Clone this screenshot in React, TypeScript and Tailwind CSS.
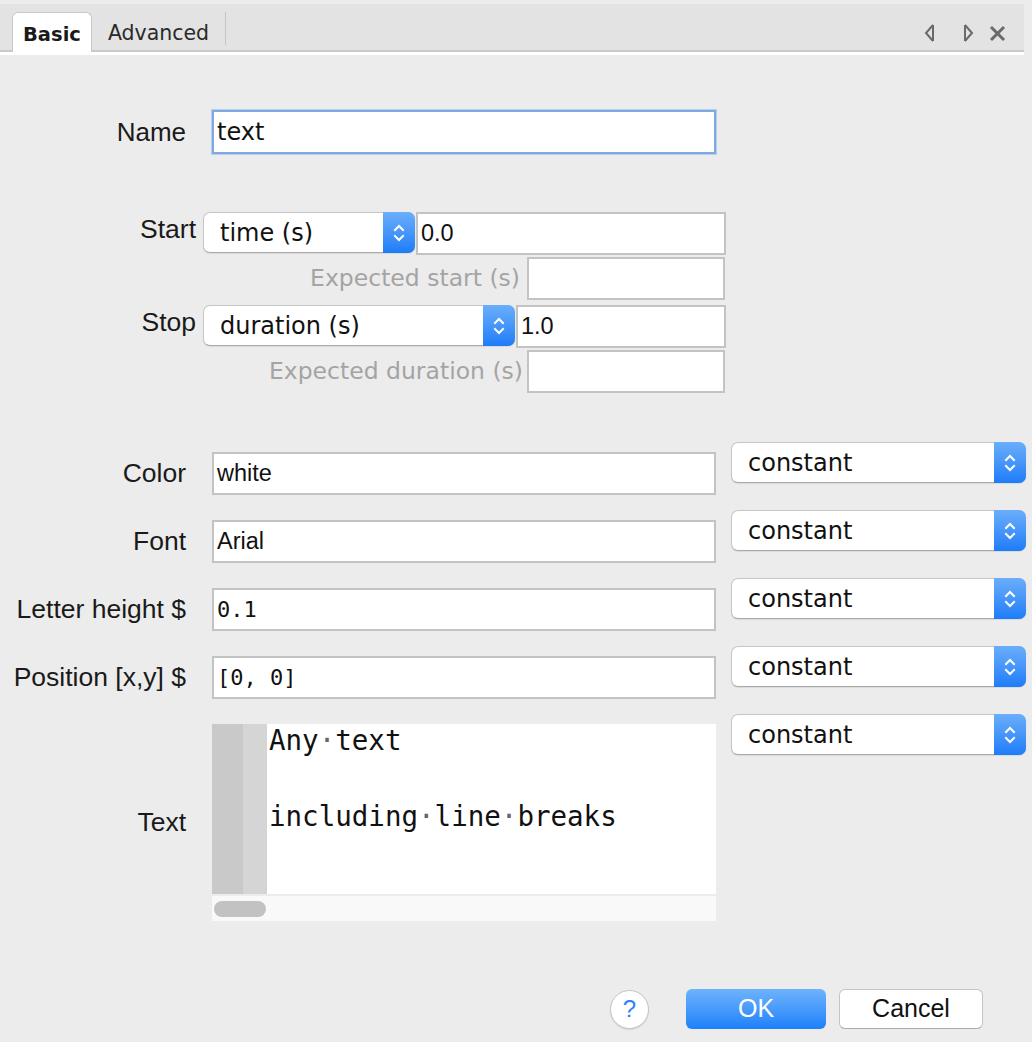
import React from 'react';

const labelFont = { fontFamily: '"Liberation Sans", Arial, sans-serif' };
const uiFont = { fontFamily: '"DejaVu Sans", "Liberation Sans", sans-serif' };
const monoFont = { fontFamily: '"DejaVu Sans Mono", "Liberation Mono", monospace' };

const Chevrons: React.FC = () => (
  <svg width="14" height="24" viewBox="0 0 14 24" fill="none" stroke="white" strokeWidth="2" strokeLinecap="square">
    <polyline points="3,9 7,5 11,9" />
    <polyline points="3,15 7,19 11,15" />
  </svg>
);

const Dropdown: React.FC<{ value: string; width: string }> = ({ value, width }) => (
  <div className={`flex h-[41px] ${width} shrink-0 rounded-[7px] bg-white border border-[#c6c6c6] border-b-[#a9a9a9] shadow-[0_1px_1px_rgba(0,0,0,0.08)]`}>
    <div className="flex-1 flex items-center pl-[16px] text-[24px] text-[#111]" style={uiFont}>
      {value}
    </div>
    <div className="w-[32px] -my-px -mr-px rounded-r-[7px] bg-gradient-to-b from-[#6aaefb] to-[#1b7cf8] flex items-center justify-center">
      <Chevrons />
    </div>
  </div>
);

const TextInput: React.FC<{ value?: string; width: string; mono?: boolean; className?: string }> = ({ value = '', width, mono, className = '' }) => (
  <div
    className={`${width} h-[43px] shrink-0 bg-white border-2 border-[#c3c3c3] flex items-center pl-[3px] text-[#111] ${mono ? 'text-[22px]' : 'text-[23.5px]'} ${className}`}
    style={mono ? monoFont : labelFont}
  >
    {value}
  </div>
);

const PropRow: React.FC<{ label: string; value: string; mono?: boolean }> = ({ label, value, mono }) => (
  <div className="flex items-start">
    <div className="w-[186px] mt-[10px] h-[43px] flex items-center justify-end text-[26.5px] text-[#1a1a1a] whitespace-nowrap" style={labelFont}>
      {label}
    </div>
    <TextInput value={value} width="w-[504px]" mono={mono} className="ml-[26px] mt-[10px]" />
    <div className="ml-[15px]">
      <Dropdown value="constant" width="w-[295px]" />
    </div>
  </div>
);

const Dot = () => <span className="text-[#666]">·</span>;

export default function App() {
  return (
    <div className="w-[1032px] h-[1042px] bg-[#ececec] flex flex-col overflow-hidden" style={labelFont}>
      {/* tab bar */}
      <div className="mt-[4px] mr-[8px] h-[48px] bg-[#e3e3e3] border-b-2 border-[#c9c9c9] flex items-end pl-[12px]">
        <div className="h-[40px] -mb-[2px] bg-white border border-b-0 border-[#c8c8c8] rounded-t-[6px] px-[10px] pt-[4px] flex items-center text-[19.5px] font-bold text-[#1a1a1a]" style={uiFont}>
          Basic
        </div>
        <div className="h-[38px] px-[16px] pt-[4px] flex items-center text-[20.5px] text-[#2a2a2a]" style={uiFont}>
          Advanced
        </div>
        <div className="self-start mt-[8px] w-px h-[33px] bg-[#c6c6c6]" />
        <div className="flex-1" />
        <div className="self-start mt-[20px] flex items-center text-[#6a6a6a]">
          <svg width="11" height="18" viewBox="0 0 11 18" fill="none" stroke="currentColor" strokeWidth="2">
            <polyline points="9,1 9,17" />
            <polyline points="9,1 2,9 9,17" />
          </svg>
          <svg className="ml-[28px]" width="11" height="18" viewBox="0 0 11 18" fill="none" stroke="currentColor" strokeWidth="2">
            <polyline points="2,1 2,17" />
            <polyline points="2,1 9,9 2,17" />
          </svg>
          <svg className="ml-[15px] mr-[18px]" width="17" height="17" viewBox="0 0 17 17" fill="none" stroke="currentColor" strokeWidth="3">
            <line x1="2" y1="2" x2="15" y2="15" />
            <line x1="15" y1="2" x2="2" y2="15" />
          </svg>
        </div>
      </div>
      <div className="h-[3px] mr-[8px] bg-white" />

      {/* Name */}
      <div className="mt-[55px] flex items-center">
        <div className="w-[186px] text-right text-[26px] text-[#1a1a1a]">Name</div>
        <div className="ml-[26px] w-[504px] h-[44px] bg-white border-2 border-[#7fa9e2] shadow-[0_0_0_1px_#b6cff1] flex items-center pl-[3px] text-[24px] text-[#111]" style={uiFont}>
          text
        </div>
      </div>

      {/* Start / Stop */}
      <div className="mt-[58px] flex flex-col">
        <div className="flex items-start">
          <div className="w-[196px] text-right text-[26.5px] leading-[30px] mt-[2px] text-[#1a1a1a]">Start</div>
          <div className="ml-[7px]">
            <Dropdown value="time (s)" width="w-[212px]" />
          </div>
          <TextInput value="0.0" width="w-[310px]" className="ml-px" />
        </div>
        <div className="flex items-center mt-[2px]">
          <div className="w-[527px] pr-[7px] text-right text-[23.5px] text-[#a4a4a4] whitespace-nowrap" style={uiFont}>
            Expected start (s)
          </div>
          <TextInput width="w-[198px]" />
        </div>
        <div className="flex items-start mt-[5px]">
          <div className="w-[196px] text-right text-[26.5px] leading-[30px] mt-[2px] text-[#1a1a1a]">Stop</div>
          <div className="ml-[7px]">
            <Dropdown value="duration (s)" width="w-[312px]" />
          </div>
          <TextInput value="1.0" width="w-[210px]" className="ml-px" />
        </div>
        <div className="flex items-center mt-[2px]">
          <div className="w-[527px] pr-[4px] text-right text-[23.5px] text-[#a4a4a4] whitespace-nowrap" style={uiFont}>
            Expected duration (s)
          </div>
          <TextInput width="w-[198px]" />
        </div>
      </div>

      {/* properties */}
      <div className="mt-[49px] flex flex-col gap-[15px]">
        <PropRow label="Color" value="white" />
        <PropRow label="Font" value="Arial" />
        <PropRow label="Letter height $" value="0.1" mono />
        <PropRow label="Position [x,y] $" value="[0, 0]" mono />
        <div className="flex items-start">
          <div className="w-[186px] mt-[10px] h-[197px] flex items-center justify-end text-[26.5px] text-[#1a1a1a]">Text</div>
          <div className="ml-[26px] mt-[10px] w-[504px] flex flex-col">
            <div className="h-[170px] bg-white flex overflow-hidden">
              <div className="w-[31px] bg-[#c9c9c9]" />
              <div className="w-[24px] bg-[#d5d5d5]" />
              <div className="pl-[2px] -mt-[3px] text-[27.5px] leading-[38px] text-[#111] whitespace-pre" style={monoFont}>
                <div>Any<Dot />text</div>
                <div>&nbsp;</div>
                <div>including<Dot />line<Dot />breaks</div>
              </div>
            </div>
            <div className="h-[2px] bg-[#ececec]" />
            <div className="h-[25px] bg-[#f9f9f9] flex items-center pl-[2px]">
              <div className="w-[52px] h-[16px] rounded-full bg-[#c2c2c2]" />
            </div>
          </div>
          <div className="ml-[15px]">
            <Dropdown value="constant" width="w-[295px]" />
          </div>
        </div>
      </div>

      <div className="flex-1" />

      {/* footer */}
      <div className="flex items-center justify-end pr-[49px] pb-[13px]">
        <div className="w-[39px] h-[39px] rounded-full bg-white border border-[#c4c4c4] shadow-[0_1px_1px_rgba(0,0,0,0.1)] flex items-center justify-center text-[24px] text-[#2e82f8]">
          ?
        </div>
        <div className="ml-[37px] w-[140px] h-[40px] rounded-[6px] bg-gradient-to-b from-[#6db3fb] to-[#1a80fa] flex items-center justify-center text-[25px] text-white">
          OK
        </div>
        <div className="ml-[13px] w-[144px] h-[40px] rounded-[6px] bg-white border border-[#c4c4c4] border-b-[#ababab] flex items-center justify-center text-[25px] text-[#111]">
          Cancel
        </div>
      </div>
    </div>
  );
}
